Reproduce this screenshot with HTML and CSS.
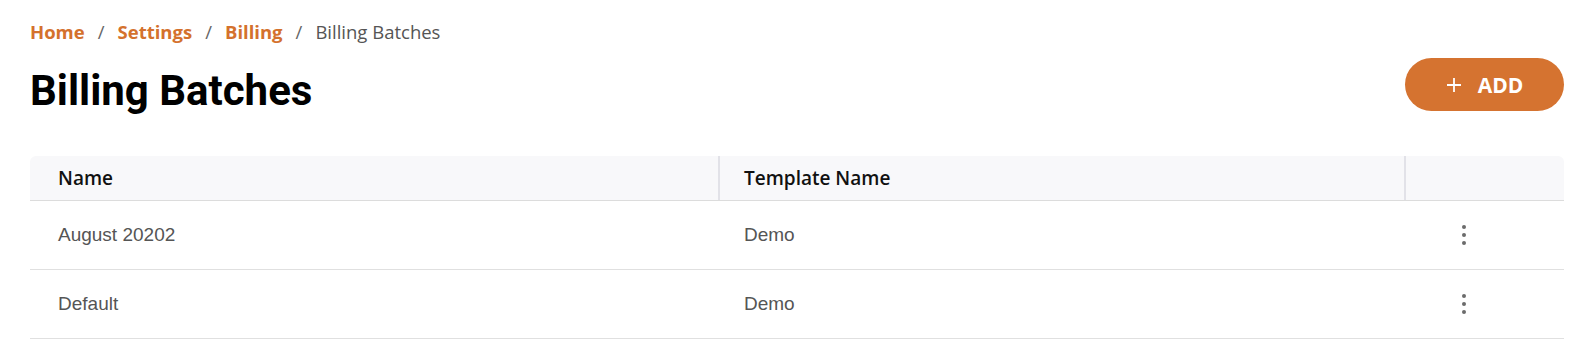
FILE: index.html
```html
<!DOCTYPE html>
<html>

<head>
  <meta charset="utf-8">
  <meta name="viewport" content="width=device-width">
  <title>Billing Batches</title>
  <link rel="stylesheet" href="styles.css">
</head>

<body>
  <!-- Breadcrumb trail -->
  <nav class="crumbs">
    <a href="#">Home</a>
    <span class="sep">/</span>
    <a href="#">Settings</a>
    <span class="sep">/</span>
    <a href="#">Billing</a>
    <span class="sep">/</span>
    <span class="current">Billing Batches</span>
  </nav>

  <!-- Page title and add button -->
  <header class="page-head">
    <h1 class="title">Billing Batches</h1>
    <button class="add-btn" type="button">
      <svg width="16" height="16" viewBox="0 0 16 16">
        <path d="M8 1v14M1 8h14" stroke="#fff" stroke-width="1.8" fill="none"/>
      </svg>
      ADD
    </button>
  </header>

  <!-- Batches table -->
  <table class="grid">
    <colgroup>
      <col class="col-name">
      <col class="col-template">
      <col class="col-actions">
    </colgroup>
    <thead>
      <tr>
        <th>Name</th>
        <th>Template Name</th>
        <th></th>
      </tr>
    </thead>
    <tbody>
      <tr>
        <td>August 20202</td>
        <td>Demo</td>
        <td><span class="kebab"><i></i><i></i><i></i></span></td>
      </tr>
      <tr>
        <td>Default</td>
        <td>Demo</td>
        <td><span class="kebab"><i></i><i></i><i></i></span></td>
      </tr>
    </tbody>
  </table>
</body>

</html>
```

FILE: styles.css
```css
body {
  margin: 0;
  padding: 0 28px 0 30px;
  background: #fff;
  font-family: "Open Sans", "Noto Sans", sans-serif;
}

/* Breadcrumb */
.crumbs {
  margin-top: 19px;
  font-size: 18.5px;
  line-height: 25px;
  display: flex;
  align-items: center;
}

.crumbs a {
  color: #d4712d;
  font-weight: 700;
  text-decoration: none;
}

.crumbs .sep {
  color: #666;
  margin: 0 13px;
}

.crumbs .current {
  color: #555;
}

/* Page header */
.page-head {
  display: flex;
  justify-content: space-between;
  align-items: flex-start;
  margin-top: 14px;
}

.title {
  font-family: Roboto, sans-serif;
  font-weight: 700;
  font-size: 42px;
  line-height: 48px;
  margin: 9px 0 0 0;
  color: #000;
}

.add-btn {
  width: 159px;
  height: 53px;
  border: none;
  border-radius: 27px;
  background: #d57330;
  color: #fff;
  font-family: "Open Sans", sans-serif;
  font-weight: 700;
  font-size: 21px;
  display: flex;
  align-items: center;
  justify-content: center;
  gap: 16px;
  cursor: pointer;
}

/* Table */
.grid {
  width: 100%;
  margin-top: 41px;
  border-collapse: separate;
  border-spacing: 0;
  table-layout: fixed;
}

.col-name,
.col-template {
  width: 686px;
}

.grid th {
  position: relative;
  height: 44px;
  padding: 0 0 0 28px;
  background: #f8f8fa;
  border-bottom: 1px solid #dcdcdc;
  text-align: left;
  font-family: "Open Sans", sans-serif;
  font-weight: 600;
  font-size: 19px;
  color: #111;
}

.grid th:first-child {
  border-top-left-radius: 6px;
}

.grid th:last-child {
  border-top-right-radius: 6px;
}

/* column separators sit at the left edge of the next header cell */
.grid th:not(:first-child)::before {
  content: "";
  position: absolute;
  left: 2px;
  top: 0;
  bottom: 0;
  width: 2px;
  background: #e2e2e8;
}

.grid td {
  height: 68px;
  padding: 0 0 0 28px;
  border-bottom: 1px solid #e0e0e0;
  font-family: "Liberation Sans", Arial, sans-serif;
  font-size: 19px;
  color: #555;
}

.grid td:last-child {
  padding-left: 60px;
}

.kebab {
  display: flex;
  flex-direction: column;
  gap: 4px;
  width: 4px;
}

.kebab i {
  width: 4px;
  height: 4px;
  border-radius: 50%;
  background: #6b6b6b;
}
```
